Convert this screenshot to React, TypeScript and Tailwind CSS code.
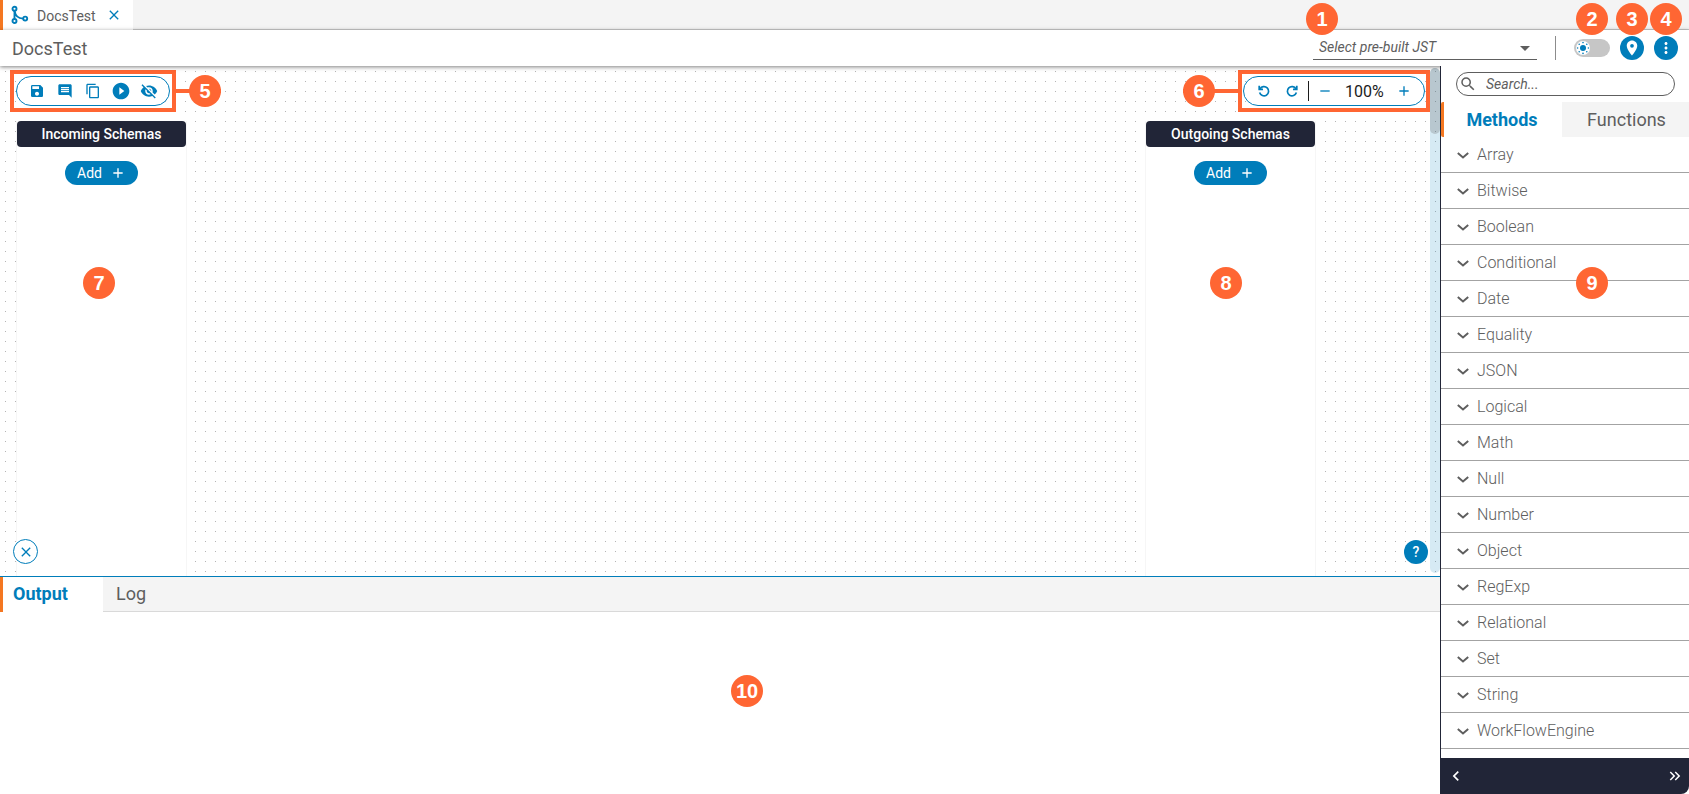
import { useState } from "react";
import {
  MdAdd,
  MdChevronLeft,
  MdClose,
  MdContentCopy,
  MdInsertComment,
  MdKeyboardDoubleArrowRight,
  MdMoreVert,
  MdPlayCircleFilled,
  MdRemove,
  MdRoom,
  MdSave,
  MdSearch,
  MdVisibilityOff,
} from "react-icons/md";

const methods = [
  "Array",
  "Bitwise",
  "Boolean",
  "Conditional",
  "Date",
  "Equality",
  "JSON",
  "Logical",
  "Math",
  "Null",
  "Number",
  "Object",
  "RegExp",
  "Relational",
  "Set",
  "String",
  "WorkFlowEngine",
];

type BadgeProps = {
  label: string;
  className: string;
};

// numbered callout
const Badge = ({ label, className }: BadgeProps) => (
  <span
    className={`absolute z-30 flex h-8 w-8 items-center justify-center rounded-full bg-[#ff6633] font-['Liberation_Sans',sans-serif] text-xl font-bold text-white ${className}`}
  >
    {label}
  </span>
);

const BranchIcon = () => (
  <svg width="18" height="20" viewBox="0 0 18 20" fill="none" stroke="#007dba" strokeWidth="1.9">
    <circle cx="3.5" cy="3.8" r="2" />
    <circle cx="3.5" cy="16" r="2" />
    <circle cx="14.2" cy="13.6" r="2" />
    <path d="M3.5 5.8V14M3.7 6C4.2 10.5 7 13.4 12.2 13.6" />
  </svg>
);

const RotateIcon = ({ flip = false }: { flip?: boolean }) => (
  <svg
    width="14"
    height="14"
    viewBox="0 0 14 14"
    fill="none"
    stroke="currentColor"
    strokeWidth="1.7"
    className={flip ? "-scale-x-100" : ""}
  >
    <path d="M3 5A4.6 4.6 0 1 1 2.6 8.6" />
    <path d="M2.2 1.8V5.4H6" />
  </svg>
);

const ChevronIcon = () => (
  <svg width="14" height="14" viewBox="0 0 14 14" fill="none" stroke="currentColor" strokeWidth="2">
    <path d="M1.8 5L7 9.4L12.2 5" />
  </svg>
);

const SunIcon = () => (
  <svg width="14" height="14" viewBox="0 0 14 14" fill="#007dba">
    <circle cx="7" cy="7" r="3" />
    <circle cx="7" cy="1.6" r="0.8" />
    <circle cx="7" cy="12.4" r="0.8" />
    <circle cx="1.6" cy="7" r="0.8" />
    <circle cx="12.4" cy="7" r="0.8" />
    <circle cx="3.2" cy="3.2" r="0.8" />
    <circle cx="10.8" cy="3.2" r="0.8" />
    <circle cx="3.2" cy="10.8" r="0.8" />
    <circle cx="10.8" cy="10.8" r="0.8" />
  </svg>
);

type SchemaColumnProps = {
  title: string;
  badge: string;
  badgeClass: string;
};

const SchemaColumn = ({ title, badge, badgeClass }: SchemaColumnProps) => (
  <section className="relative flex w-[171px] flex-col items-center border-x border-[#f6f6f6] bg-white">
    <h2 className="h-[26px] w-full rounded bg-[#212537] text-center text-sm leading-[27px] font-medium text-white">
      {title}
    </h2>
    <button
      type="button"
      className="mt-3.5 flex h-6 w-[73px] cursor-pointer items-center justify-center gap-2 rounded-full bg-[#007dba] text-sm text-white"
    >
      Add
      <MdAdd className="h-4 w-4" />
    </button>
    <Badge label={badge} className={badgeClass} />
  </section>
);

const App = () => {
  const [tab, setTab] = useState("methods");
  const [output, setOutput] = useState("output");
  const [search, setSearch] = useState("");
  const [dark, setDark] = useState(false);

  return (
    <div className="flex h-screen flex-col overflow-hidden bg-white font-[Roboto,sans-serif] text-[#5e5e5e]">
      {/* file tabs */}
      <div className="flex h-[30px] shrink-0 bg-[#f4f4f4]">
        <div className="flex w-[133px] items-center border-l-3 border-[#f47721] bg-white pl-2 text-sm">
          <BranchIcon />
          <span className="ml-2 pt-0.5">DocsTest</span>
          <button type="button" aria-label="Close tab" className="ml-2.5 cursor-pointer text-[#007dba]">
            <MdClose className="h-4 w-4" />
          </button>
        </div>
        <div className="flex-1 border-b border-[#cccccc]" />
      </div>

      {/* title bar */}
      <header className="relative z-10 flex h-9 shrink-0 items-center bg-white pr-[11px] pl-3 shadow-[0_1px_4px_rgba(0,0,0,0.5)]">
        <h1 className="flex-1 pt-0.5 text-lg">DocsTest</h1>
        <div className="relative">
          <select
            aria-label="Select pre-built JST"
            className="block h-6 w-[224px] appearance-none border-b border-[#5e5e5e] bg-transparent pb-0.5 pl-1.5 text-sm italic outline-none"
          >
            <option>Select pre-built JST</option>
          </select>
          <span className="pointer-events-none absolute top-2.5 right-[7px] border-x-5 border-t-5 border-x-transparent border-t-[#5e5e5e]" />
          <Badge label="1" className="-top-[33px] -left-[7px]" />
        </div>
        <span className="ml-[18px] h-6 w-px bg-[#8c8c8c]" />
        <label className="relative ml-[18px] flex h-[18px] w-9 cursor-pointer items-center rounded-full bg-[#c6c6c6] px-0.5">
          <input
            type="checkbox"
            aria-label="Dark theme"
            className="sr-only"
            checked={dark}
            onChange={(e) => setDark(e.target.checked)}
          />
          <span className={`flex h-3.5 w-3.5 items-center justify-center rounded-full bg-white ${dark ? "ml-auto" : ""}`}>
            <SunIcon />
          </span>
          <Badge label="2" className="-top-9 left-0.5" />
        </label>
        <button
          type="button"
          aria-label="Location"
          className="relative ml-2.5 flex h-6 w-6 cursor-pointer items-center justify-center rounded-full bg-[#007dba] text-white"
        >
          <MdRoom className="h-[18px] w-[18px]" />
          <Badge label="3" className="-top-[33px] -left-1" />
        </button>
        <button
          type="button"
          aria-label="More"
          className="relative ml-2.5 flex h-6 w-6 cursor-pointer items-center justify-center rounded-full bg-[#007dba] text-white"
        >
          <MdMoreVert className="h-[18px] w-[18px]" />
          <Badge label="4" className="-top-[33px] -left-1" />
        </button>
      </header>

      <div className="flex min-h-0 flex-1">
        <main className="flex min-w-0 flex-1 flex-col">
          {/* canvas */}
          <div className="relative flex h-[510px] shrink-0 justify-between bg-[linear-gradient(#fff_9px,transparent_9px),linear-gradient(90deg,#fff_9px,#b4b4b4_9px)] bg-[length:10px_10px] bg-[position:-4px_-4px] pt-[55px] pr-[124px] pl-4">
            <SchemaColumn title="Incoming Schemas" badge="7" badgeClass="top-[146px] left-[66px]" />
            <SchemaColumn title="Outgoing Schemas" badge="8" badgeClass="top-[146px] left-[64px]" />

            <div className="absolute top-1 left-2.5 flex items-center">
              <div className="border-4 border-[#ff6633] p-0.5">
                <div className="flex h-[30px] w-[154px] items-center justify-center gap-2 rounded-full border border-[#007dba] bg-white text-[#007dba]">
                  <button type="button" aria-label="Save" className="flex w-5 cursor-pointer justify-center">
                    <MdSave className="h-4 w-4" />
                  </button>
                  <button type="button" aria-label="Comment" className="flex w-5 cursor-pointer justify-center">
                    <MdInsertComment className="h-4 w-4" />
                  </button>
                  <button type="button" aria-label="Copy" className="flex w-5 cursor-pointer justify-center">
                    <MdContentCopy className="h-4 w-4" />
                  </button>
                  <button type="button" aria-label="Run" className="flex w-5 cursor-pointer justify-center">
                    <MdPlayCircleFilled className="h-5 w-5" />
                  </button>
                  <button type="button" aria-label="Hide" className="flex w-5 cursor-pointer justify-center">
                    <MdVisibilityOff className="h-[18px] w-[18px]" />
                  </button>
                </div>
              </div>
              <span className="h-1 w-[45px] bg-[#ff6633]" />
              <Badge label="5" className="right-0" />
            </div>

            <div className="absolute top-1 right-2.5 flex items-center">
              <Badge label="6" className="left-0" />
              <span className="h-1 w-[55px] bg-[#ff6633]" />
              <div className="border-4 border-[#ff6633] px-px py-0.5">
                <div className="flex h-[30px] w-[182px] items-center rounded-full border border-[#007dba] bg-white pl-[13px] text-[#007dba]">
                  <button type="button" aria-label="Undo" className="cursor-pointer">
                    <RotateIcon />
                  </button>
                  <button type="button" aria-label="Redo" className="ml-3.5 cursor-pointer">
                    <RotateIcon flip />
                  </button>
                  <span className="ml-[9px] h-5 w-px bg-[#1c1c1c]" />
                  <button type="button" aria-label="Zoom out" className="ml-2 cursor-pointer">
                    <MdRemove className="h-4 w-4" />
                  </button>
                  <span className="ml-3 pt-0.5 text-base text-[#1c1c1c]">100%</span>
                  <button type="button" aria-label="Zoom in" className="ml-3 cursor-pointer">
                    <MdAdd className="h-4 w-4" />
                  </button>
                </div>
              </div>
            </div>

            <button
              type="button"
              aria-label="Close panel"
              className="absolute bottom-3 left-[13px] flex h-[25px] w-[25px] cursor-pointer items-center justify-center rounded-full border border-[#007dba] bg-white text-[#007dba]"
            >
              <MdClose className="h-4 w-4" />
            </button>
            <button
              type="button"
              aria-label="Help"
              className="absolute right-3 bottom-3 flex h-6 w-6 cursor-pointer items-center justify-center rounded-full bg-[#007dba] text-sm font-medium text-white"
            >
              ?
            </button>

            {/* scrollbar */}
            <div className="absolute top-0.5 right-0 bottom-[3px] w-2.5 rounded-full bg-[#007dba]/16">
              <div className="h-[66px] rounded-full bg-[#5e5e5e]/25" />
            </div>
          </div>

          {/* output */}
          <div className="flex h-9 shrink-0 border-t border-[#007dba] text-lg">
            <button
              type="button"
              className="w-[103px] cursor-pointer border-l-3 border-[#f47721] pb-0.5 pl-2.5 text-left font-bold text-[#007dba]"
              onClick={() => setOutput("output")}
            >
              Output
            </button>
            <button
              type="button"
              className="flex-1 cursor-pointer border-b border-[#d9d9d9] bg-[#f4f4f4] pl-[13px] text-left"
              onClick={() => setOutput("log")}
            >
              Log
            </button>
          </div>
          <div className="relative flex-1" aria-label={output}>
            <Badge label="10" className="top-[63px] left-[731px]" />
          </div>
        </main>

        <aside className="relative z-20 flex w-[249px] shrink-0 flex-col border-l border-[#212537] bg-white">
          <label className="relative mt-1.5 mr-3.5 ml-[15px] block">
            <MdSearch className="absolute top-[3px] left-[3px] h-[18px] w-[18px]" />
            <input
              type="text"
              aria-label="Search"
              className="block h-6 w-full rounded-full border border-[#5e5e5e] pl-[29px] text-sm italic outline-none placeholder:text-[#5e5e5e]"
              placeholder="Search..."
              value={search}
              onChange={(e) => setSearch(e.target.value)}
            />
          </label>

          <div className="mt-1.5 flex h-[35px] shrink-0 text-lg">
            <button
              type="button"
              className="w-[121px] cursor-pointer rounded-l-xs border-l-3 border-[#f47721] pr-0.5 font-bold text-[#007dba]"
              onClick={() => setTab("methods")}
            >
              Methods
            </button>
            <button
              type="button"
              className="flex-1 cursor-pointer bg-[#f4f4f4] pl-0.5"
              onClick={() => setTab("functions")}
            >
              Functions
            </button>
          </div>

          <ul className="relative min-h-0 flex-1 overflow-hidden">
            {tab === "methods" &&
              methods
                .filter((m) => m.toLowerCase().includes(search.toLowerCase()))
                .map((method) => (
                  <li key={method} className="h-9 border-b border-[#a3a3a3]">
                    <button type="button" className="flex h-full w-full cursor-pointer items-center gap-[7px] pl-[15px] text-base font-light">
                      <ChevronIcon />
                      {method}
                    </button>
                  </li>
                ))}
            <Badge label="9" className="top-[130px] left-[135px]" />
          </ul>

          <div className="flex h-9 shrink-0 items-center justify-between rounded-br-lg bg-[#212537] px-[5px] text-white">
            <button type="button" aria-label="Back" className="cursor-pointer">
              <MdChevronLeft className="h-5 w-5" />
            </button>
            <button type="button" aria-label="Collapse" className="cursor-pointer">
              <MdKeyboardDoubleArrowRight className="h-[18px] w-[18px]" />
            </button>
          </div>
        </aside>
      </div>
    </div>
  );
};

export default App;
